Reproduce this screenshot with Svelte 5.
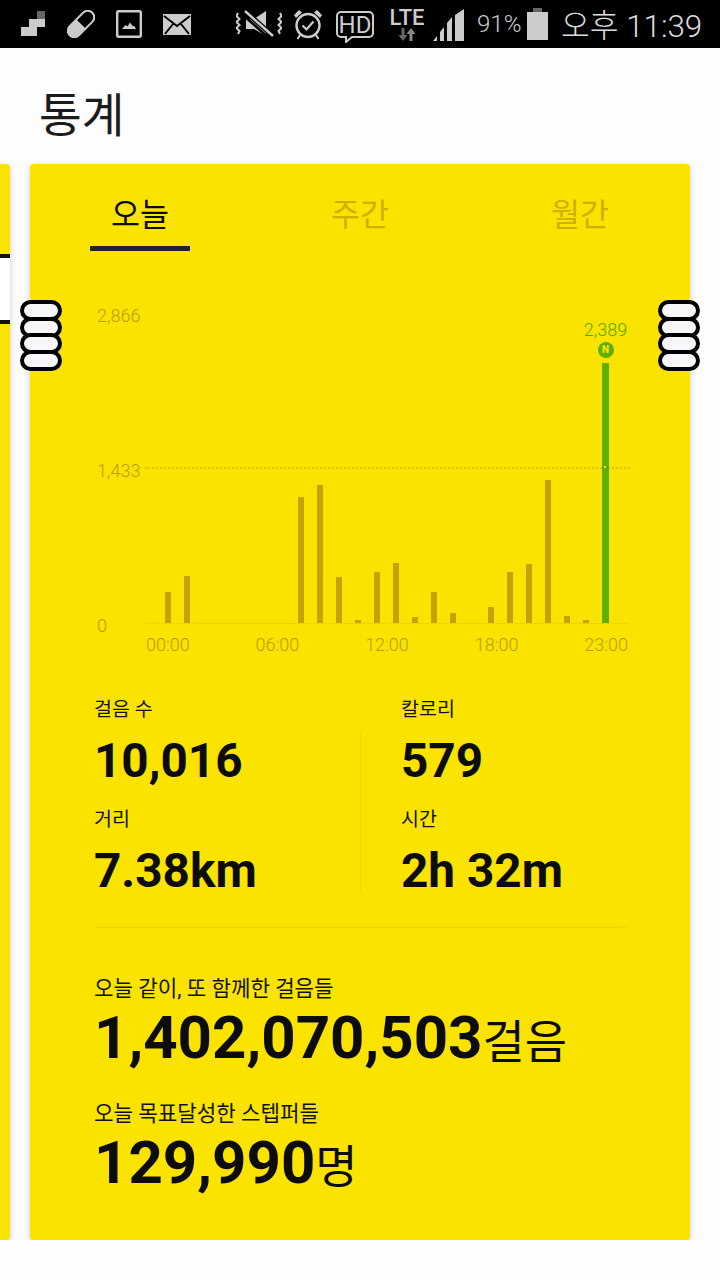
<script>
  const tabs = ['오늘', '주간', '월간'];
  const hours = ['00:00', '06:00', '12:00', '18:00', '23:00'];
  const yLabels = ['2,866', '1,433', '0'];
  // bar heights in px for each hour, last one is the current hour
  const bars = [31, 47, 0, 0, 0, 0, 0, 126, 138, 46, 3, 51, 60, 6, 31, 10, 0, 16, 51, 59, 143, 7, 3, 260];
  const rings = [0, 1, 2, 3];
</script>

<div class="status">
  <svg class="i-stairs" viewBox="0 0 26 26"><path d="M9 8h8v-8h8v16h-8v9H1v-9h8z" fill="#ccc"/><rect x="17" width="8" height="8" fill="#666"/></svg>
  <svg class="i-pill" viewBox="0 0 28 28"><g transform="rotate(-45 14 14)"><rect x="-2" y="7.500" width="32" height="13" rx="6.500" fill="none" stroke="#ccc" stroke-width="2"/><path d="M14 7.500H4.500a6.500 6.500 0 0 0 0 13H14z" fill="#ccc"/></g></svg>
  <svg class="i-pic" viewBox="0 0 26 28"><rect x="1.200" y="1.200" width="23.600" height="25.600" rx="1.500" fill="none" stroke="#ccc" stroke-width="2.400"/><path d="M6 19l3.500-4 2 1.500 2.500-4 3 4 1-1 2 3.500z" fill="#ccc"/></svg>
  <svg class="i-mail" viewBox="0 0 28 21"><rect width="28" height="21" fill="#ccc"/><path d="M1 2l13 10L27 2M2 20l8-10M26 20l-8-10" fill="none" stroke="#000" stroke-width="2"/></svg>
  <svg class="i-mute" viewBox="0 0 46 28"><path d="M2 3l-1.500 3 3 3-3 3 3 3-3 3 3 3-1.500 3M44 3l1.500 3-3 3 3 3-3 3 3 3-3 3 1.500 3" fill="none" stroke="#ccc" stroke-width="2"/><path d="M10 9h8l12-8v25L18 19h-8z" fill="#ccc"/><path d="M9 1l28 25" stroke="#000" stroke-width="5"/><path d="M9 1l28 25" stroke="#ccc" stroke-width="2.400"/><path d="M6 4l28 25" stroke="#000" stroke-width="2.500"/></svg>
  <svg class="i-alarm" viewBox="0 0 30 31"><circle cx="15" cy="16.500" r="11.500" fill="none" stroke="#ccc" stroke-width="2.400"/><path d="M9.500 16.500l4 4 7-8" fill="none" stroke="#ccc" stroke-width="2.200"/><path d="M1 6l5-5 3 2.500-6 5.500zM29 6l-5-5-3 2.500 6 5.500z" fill="#ccc"/><path d="M7 26l-2.500 4M23 26l2.500 4" stroke="#ccc" stroke-width="2"/></svg>
  <svg class="i-hd" viewBox="0 0 38 32"><path d="M5 1h28a4 4 0 0 1 4 4v17a4 4 0 0 1-4 4H16l-6 5v-5H5a4 4 0 0 1-4-4V5a4 4 0 0 1 4-4z" fill="none" stroke="#ccc" stroke-width="2"/><text x="19" y="22" text-anchor="middle" class="hd-text">HD</text></svg>
  <div class="lte">
    <span>LTE</span>
    <svg viewBox="0 0 18 13"><path d="M3.500 0h3v7h3L5 13 0.500 7h3z" fill="#666"/><path d="M11.500 13h3V6h3L13 0 8.500 6h3z" fill="#888"/></svg>
  </div>
  <svg class="i-signal" viewBox="0 0 32 32"><path d="M0 32l4-5v5zM7 32v-9l4-5v14zM14 32V14l5-6v24zM22 32V6l9-6v32z" fill="#ccc"/></svg>
  <span class="batt-text">91%</span>
  <svg class="i-batt" viewBox="0 0 21 32"><rect x="6" width="9" height="4" fill="#666"/><rect y="4" width="21" height="28" fill="#ccc"/></svg>
  <span class="clock">오후 11:39</span>
</div>

<h1>통계</h1>

<div class="carousel">
  <div class="peek">
    <div class="peek-fill top"></div>
    <div class="peek-gap"></div>
    <div class="peek-fill"></div>
  </div>

  <div class="card">
    <div class="tabs">
      {#each tabs as tab, i}
        <div class="tab" class:active={i === 0}>{tab}</div>
      {/each}
    </div>

    <div class="chart">
      <div class="y-axis">
        {#each yLabels as label}
          <span>{label}</span>
        {/each}
      </div>
      <div class="plot-wrap">
        <div class="plot">
          <div class="midline"></div>
          {#each bars as h, i}
            <div class="bar" class:now={i === bars.length - 1} style="height: {h}px">
              {#if i === bars.length - 1}
                <div class="peak">
                  <span>2,389</span>
                  <b>N</b>
                </div>
              {/if}
            </div>
          {/each}
        </div>
        <div class="x-axis">
          {#each hours as hour}
            <span>{hour}</span>
          {/each}
        </div>
      </div>
    </div>

    <div class="stats">
      <div class="col">
        <div class="label">걸음 수</div>
        <div class="value">10,016</div>
        <div class="label">거리</div>
        <div class="value">7.38km</div>
      </div>
      <div class="vline"></div>
      <div class="col right">
        <div class="label">칼로리</div>
        <div class="value">579</div>
        <div class="label">시간</div>
        <div class="value">2h 32m</div>
      </div>
    </div>

    <div class="hline"></div>

    <div class="totals">
      <div class="label wide">오늘 같이, 또 함께한 걸음들</div>
      <div class="big">1,402,070,503<small>걸음</small></div>
      <div class="label wide second">오늘 목표달성한 스텝퍼들</div>
      <div class="big">129,990<small>명</small></div>
    </div>
  </div>

  <div class="rings left">
    {#each rings as r}<i></i>{/each}
  </div>
  <div class="rings rightside">
    {#each rings as r}<i></i>{/each}
  </div>
</div>

<style>
  :global(body) {
    margin: 0;
    background: #fdfdfd;
    font-family: Roboto, "Noto Sans CJK KR", sans-serif;
    color: #0c0c0c;
  }

  .status {
    height: 48px;
    background: #000;
    display: flex;
    align-items: center;
    overflow: hidden;
  }
  .status svg { flex: none; display: block; }
  .i-stairs { width: 26px; height: 26px; margin-left: 20px; margin-top: -1px; }
  .i-pill { width: 28px; height: 28px; margin-left: 21px; }
  .i-pic { width: 26px; height: 28px; margin-left: 21px; }
  .i-mail { width: 28px; height: 21px; margin-left: 21px; }
  .i-mute { width: 46px; height: 28px; margin-left: 45px; }
  .i-alarm { width: 30px; height: 31px; margin-left: 11px; }
  .i-hd { width: 38px; height: 32px; margin-left: 13px; margin-top: 6px; }
  .hd-text { font: 400 24px Roboto, sans-serif; fill: #ccc; }
  .lte {
    width: 36px;
    margin-left: 15px;
    display: flex;
    flex-direction: column;
    align-items: center;
  }
  .lte span { font: 500 22px/19px Roboto, sans-serif; color: #ccc; }
  .lte svg { width: 18px; height: 13px; margin-top: 1px; }
  .i-signal { width: 32px; height: 32px; margin-left: 8px; margin-top: 2px; }
  .batt-text { font-size: 24px; font-weight: 300; color: #ccc; margin-left: 12px; width: 50px; }
  .i-batt { width: 21px; height: 32px; }
  .clock { font-size: 31.300px; font-weight: 300; color: #ddd; margin-left: 13px; margin-top: -2px; white-space: nowrap; }

  h1 {
    margin: 0;
    height: 116px;
    padding-left: 39px;
    font-size: 46.500px;
    font-weight: 400;
    line-height: 136px;
    color: #1c1c1c;
  }

  .carousel {
    position: relative;
    display: flex;
    gap: 20px;
    height: 1076px;
  }

  .peek {
    width: 10px;
    display: flex;
    flex-direction: column;
    box-shadow: 0 2px 6px rgba(0, 0, 0, 0.2);
    border-radius: 0 4px 4px 0;
    overflow: hidden;
  }
  .peek-fill { flex: 1; background: #fbe300; }
  .peek-fill.top { flex: none; height: 90px; }
  .peek-gap {
    box-sizing: border-box;
    height: 70px;
    background: #fff;
    border-top: 4px solid #111;
    border-bottom: 4px solid #111;
  }

  .card {
    width: 660px;
    background: #fbe300;
    border-radius: 4px;
    box-shadow: 0 2px 6px rgba(0, 0, 0, 0.2);
  }

  .tabs {
    display: flex;
    justify-content: space-between;
    padding: 0 60px;
    height: 87px;
  }
  .tab {
    width: 100px;
    height: 87px;
    box-sizing: border-box;
    text-align: center;
    font-size: 31.500px;
    line-height: 103px;
    color: #cdb000;
  }
  .tab.active {
    color: #0c0c0c;
    border-bottom: 5px solid #222;
  }

  .chart {
    display: flex;
    align-items: flex-start;
    padding-left: 67px;
    margin-top: 55px;
  }
  .y-axis {
    width: 48px;
    height: 330px;
    display: flex;
    flex-direction: column;
    justify-content: space-between;
    font-size: 18px;
    font-weight: 300;
    line-height: 20px;
    color: #b89c00;
  }
  .plot-wrap { width: 485px; }
  .plot {
    position: relative;
    height: 317px;
    display: flex;
    align-items: flex-end;
    gap: 13px;
    padding-left: 20px;
    border-bottom: 1px solid #efd400;
  }
  .midline {
    position: absolute;
    left: 0;
    right: 0;
    top: 161px;
    border-top: 2px dotted #e0c400;
  }
  .bar {
    flex: none;
    position: relative;
    width: 6px;
    background: #c4a300;
  }
  .bar.now {
    width: 7px;
    background: #5fae00;
  }
  .bar.now::after {
    content: '';
    position: absolute;
    top: 103px;
    left: 2px;
    width: 2px;
    height: 2px;
    background: #d7e86a;
  }
  .peak {
    position: absolute;
    bottom: 100%;
    left: -30px;
    width: 67px;
    display: flex;
    flex-direction: column;
    align-items: center;
    color: #55a500;
    font-size: 18px;
    font-weight: 300;
    line-height: 20px;
    padding-bottom: 5px;
  }
  .peak span { margin-bottom: 1px; }
  .peak b {
    width: 16px;
    height: 16px;
    margin-top: 1px;
    border-radius: 50%;
    background: #5fae00;
    color: #fbe300;
    font-size: 10px;
    font-weight: 900;
    line-height: 16px;
    text-align: center;
  }
  .x-axis {
    display: flex;
    justify-content: space-between;
    padding: 11px 2px 0 1px;
    font-size: 18px;
    font-weight: 300;
    line-height: 20px;
    color: #b89c00;
  }

  .stats {
    display: flex;
    margin-top: 42px;
    padding-left: 64px;
  }
  .col { width: 266px; }
  .col.right { width: auto; padding-left: 40px; }
  .vline {
    width: 1px;
    height: 158px;
    margin-top: 36px;
    background: #efd400;
  }
  .label {
    font-size: 19.500px;
    line-height: 26px;
    color: #111;
  }
  .label.wide { font-size: 21.200px; }
  .value {
    font-size: 47.700px;
    font-weight: 700;
    line-height: 76px;
    margin-bottom: 8px;
  }

  .hline {
    height: 1px;
    margin: 10px 63px 0 64px;
    background: #efd400;
  }

  .totals {
    padding: 48px 0 0 64px;
  }
  .big {
    font-size: 60px;
    font-weight: 700;
    line-height: 72px;
  }
  .big small {
    font-size: 46px;
    font-weight: 400;
  }
  .label.second { margin-top: 23px; }

  .rings {
    position: absolute;
    top: 136px;
    width: 42px;
    display: flex;
    flex-direction: column;
  }
  .rings.left { left: 20px; }
  .rings.rightside { left: 658px; }
  .rings i {
    display: block;
    box-sizing: border-box;
    height: 21px;
    margin-bottom: -4.500px;
    background: #f7f7f9;
    border: 4px solid #000;
    border-radius: 11px;
  }
</style>
